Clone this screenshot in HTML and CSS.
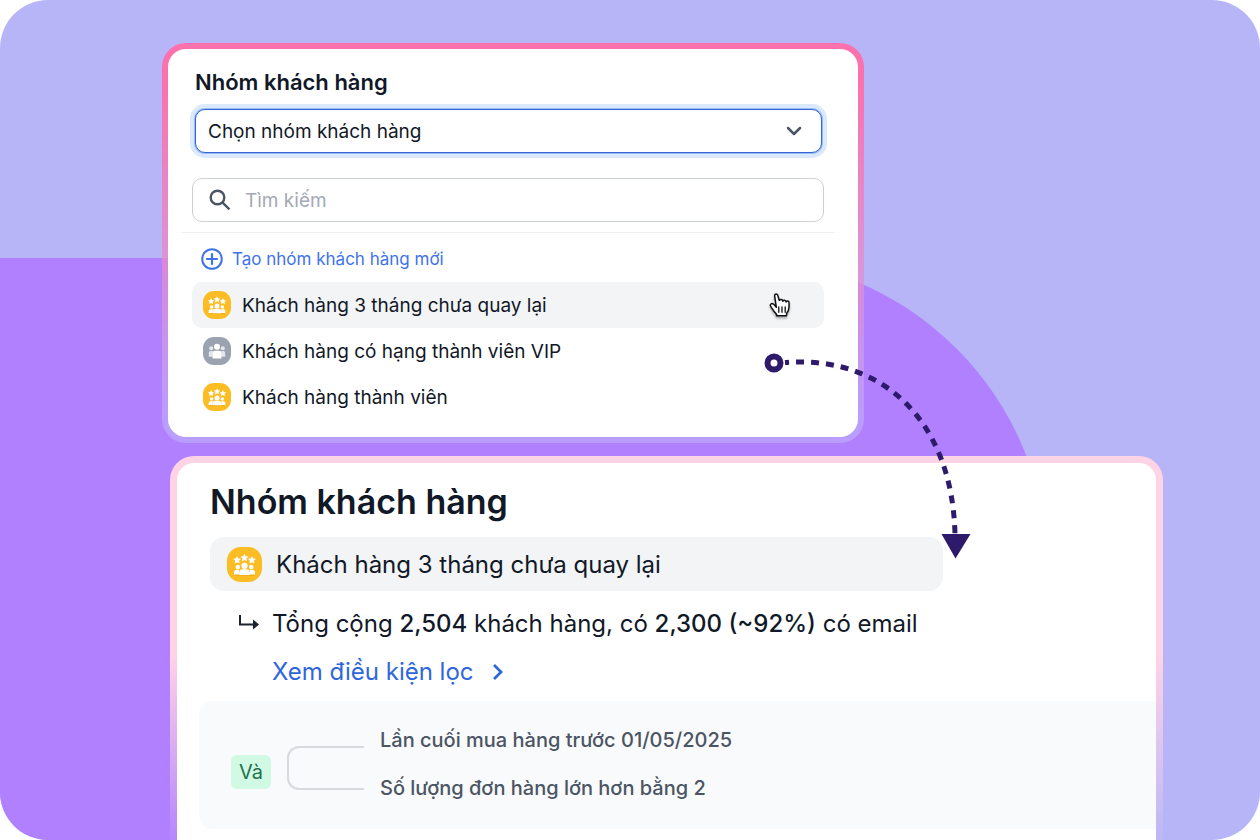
FILE: index.html
```html
<!DOCTYPE html>
<html lang="vi">
<head>
<meta charset="utf-8">
<meta name="viewport" content="width=device-width, initial-scale=1">
<title>Nhóm khách hàng</title>
<link rel="stylesheet" href="styles.css">
</head>
<body>
<svg class="sprite" aria-hidden="true">
  <defs>
    <path id="star" d="M0-3.100 1-1.100 3.200-.8 1.600.8 2 3 0 1.900-2 3-1.600.8-3.200-.8-1-1.100Z"/>
    <symbol id="icon-vip" viewBox="0 0 28 28">
      <rect width="28" height="28" rx="11" fill="#fbbd23"/>
      <path d="M6 23v-2c0-1.800 1.200-2.800 3-2.800h10c1.800 0 3 1 3 2.800v2Z" fill="#c98a00" opacity=".3"/>
      <g fill="#fff">
        <use href="#star" x="14" y="8.400"/>
        <use href="#star" x="8.100" y="10.200"/>
        <use href="#star" x="19.900" y="10.200"/>
        <circle cx="8.600" cy="16" r="1.800"/>
        <circle cx="19.400" cy="16" r="1.800"/>
        <path d="M5.600 21.900v-1.700c0-1.300.9-2 2.200-2h2v3.700ZM22.400 21.900v-1.700c0-1.300-.9-2-2.200-2h-2v3.700Z"/>
        <circle cx="14" cy="15" r="2.500"/>
        <path d="M9.800 22.300v-2.100c0-1.600 1-2.400 2.700-2.400h3c1.700 0 2.700.8 2.700 2.400v2.100Z"/>
      </g>
    </symbol>
    <symbol id="icon-people" viewBox="0 0 28 28">
      <rect width="28" height="28" rx="11" fill="#9ba3b1"/>
      <g fill="#e3e6eb">
        <circle cx="8.200" cy="11.200" r="2"/>
        <circle cx="19.800" cy="11.200" r="2"/>
        <path d="M5.800 19.800v-3.800c0-1.300.8-2 2-2h2v5.800ZM22.200 19.800v-3.800c0-1.300-.8-2-2-2h-2v5.800Z"/>
      </g>
      <circle cx="14" cy="9.800" r="3" fill="#fff"/>
      <path d="M9.600 21.600v-5.400c0-1.700 1-2.500 2.600-2.500h3.600c1.600 0 2.600.8 2.600 2.500v5.400Z" fill="#fff"/>
    </symbol>
  </defs>
</svg>

<main class="stage">
  <div class="blob"></div>

  <section class="frame frame-picker">
    <div class="picker">
      <label class="picker-title" for="group">Nhóm khách hàng</label>
      <div class="select-wrap">
        <select class="select" id="group">
          <option>Chọn nhóm khách hàng</option>
        </select>
        <svg class="select-arrow" viewBox="0 0 16 10" aria-hidden="true"><path d="M2 2l6 6 6-6" fill="none" stroke="#4b5563" stroke-width="2.500" stroke-linecap="round" stroke-linejoin="round"/></svg>
      </div>

      <div class="menu">
        <label class="search">
          <svg class="search-icon" viewBox="0 0 22 22" aria-hidden="true"><g fill="none" stroke="#4b5563" stroke-width="2.400"><circle cx="8.500" cy="8.500" r="6.800"/><path d="M13.400 13.400l7 7"/></g></svg>
          <input class="search-input" type="text" placeholder="Tìm kiếm" aria-label="Tìm kiếm">
        </label>
        <hr class="rule">
        <button class="create" type="button">
          <svg class="create-icon" viewBox="0 0 22 22" aria-hidden="true"><g fill="none" stroke="#3f73ec" stroke-width="2"><circle cx="11" cy="11" r="9.800"/><path d="M11 6v10M6 11h10" stroke-width="2.200" stroke-linecap="round"/></g></svg>
          Tạo nhóm khách hàng mới
        </button>
        <button class="option option-active" type="button">
          <svg class="badge"><use href="#icon-vip"/></svg>
          <span class="option-text">Khách hàng 3 tháng chưa quay lại</span>
          <svg class="hand" viewBox="0 0 22 26" aria-hidden="true"><path d="M7.300 15.200 5.200 12.800C4.300 11.700 2.900 11.200 2 12c-.9.700-.7 1.800 0 2.900l2.900 4.300 2.600 3.100v1.500h9.900l.2-2.200c1.900-2.200 2.300-4 2.400-6.300l.1-4.400c0-2.100-2.500-2.600-3-.8 0-2-2.900-2.700-3.300-.8-.1-2-2.700-2.400-3.500-.8L8.900 3.700C8.400 1.100 5.200 1.700 5.700 4.400Z" fill="#fff" stroke="#111" stroke-width="1.500" stroke-linejoin="round"/><path d="M9.800 15v5.300M13 15v5.300M16.200 15v5.300" fill="none" stroke="#111" stroke-width="1.300" stroke-linecap="round"/></svg>
        </button>
        <button class="option" type="button">
          <svg class="badge"><use href="#icon-people"/></svg>
          <span class="option-text">Khách hàng có hạng thành viên VIP</span>
        </button>
        <button class="option" type="button">
          <svg class="badge"><use href="#icon-vip"/></svg>
          <span class="option-text">Khách hàng thành viên</span>
        </button>
      </div>
    </div>
  </section>

  <section class="frame frame-result">
    <div class="result">
      <h2 class="result-title">Nhóm khách hàng</h2>
      <div class="chosen">
        <svg class="badge badge-large"><use href="#icon-vip"/></svg>
        <span>Khách hàng 3 tháng chưa quay lại</span>
      </div>
      <div class="summary">
        <svg class="turn" viewBox="0 0 20 18" aria-hidden="true"><path d="M1 0v9.500h14" fill="none" stroke="#1b2333" stroke-width="2"/><path d="M14 4.500l6 5-6 5Z" fill="#1b2333"/></svg>
        <p class="summary-text">Tổng cộng <strong>2,504</strong> khách hàng, có <strong>2,300 (~92%)</strong> có email</p>
      </div>
      <a class="filter-link" href="#conditions">Xem điều kiện lọc
        <svg class="filter-arrow" viewBox="0 0 12 18" aria-hidden="true"><path d="M2 2l7 7-7 7" fill="none" stroke="#2f66dd" stroke-width="2.800"/></svg>
      </a>
      <div class="conditions" id="conditions">
        <span class="and">Và</span>
        <span class="bracket"></span>
        <ul class="condition-list">
          <li>Lần cuối mua hàng trước 01/05/2025</li>
          <li>Số lượng đơn hàng lớn hơn bằng 2</li>
        </ul>
      </div>
    </div>
  </section>

  <svg class="connector" viewBox="0 0 210 210" aria-hidden="true">
    <circle cx="14" cy="13" r="6.500" fill="#fff" stroke="#2e1a6b" stroke-width="6"/>
    <path d="M25 12.500C120 5 192 68 195 184" fill="none" stroke="#2e1a6b" stroke-width="5" stroke-dasharray="8 7" stroke-dashoffset="4"/>
    <path d="M181.500 184h29L195.500 208.500Z" fill="#2e1a6b"/>
  </svg>
</main>
</body>
</html>
```
FILE: styles.css
```css
* {
  box-sizing: border-box;
}

body {
  margin: 0;
  background: #fff;
  color: #111827;
  font-family: Inter, "Noto Sans", sans-serif;
}

button,
input,
select {
  font: inherit;
  color: inherit;
}

.sprite {
  position: absolute;
  width: 0;
  height: 0;
}

.stage {
  position: relative;
  display: flex;
  flex-direction: column;
  gap: 13px;
  height: 100vh;
  padding: 43px 97px 0 162px;
  overflow: hidden;
  border-radius: 48px;
  background: #b7b5f7;
}

.blob {
  position: absolute;
  top: 258px;
  left: 0;
  width: 1047px;
  height: 618px;
  border-radius: 0 309px 309px 0;
  background: #b080ff;
}

.frame {
  position: relative;
  flex: none;
}

.frame-picker {
  max-width: 702px;
  padding: 6px;
  border-radius: 24px;
  background: linear-gradient(#fb71ae 10%, rgba(193, 181, 255, 0.55) 95%);
}

.picker {
  padding: 18px 22px 17px 24px;
  border-radius: 18px;
  background: #fff;
}

.picker-title {
  display: block;
  padding-left: 3px;
  font-size: 22px;
  font-weight: 600;
  line-height: 30px;
}

.select-wrap {
  position: relative;
  margin: 12px 14px 0 3px;
}

.select {
  display: block;
  width: 100%;
  height: 44px;
  padding: 0 12px;
  appearance: none;
  border: 1px solid #3366d0;
  border-radius: 10px;
  outline: 0;
  background: #fff;
  box-shadow: 0 0 0 1px #9cbcf5, 0 0 0 5px #dbe9fe;
  font-size: 19px;
}

.select-arrow {
  position: absolute;
  top: 17px;
  right: 20px;
  width: 16px;
  height: 10px;
  pointer-events: none;
}

.menu {
  display: flex;
  flex-direction: column;
  margin: 25px 12px 0 0;
}

.search {
  display: flex;
  align-items: center;
  gap: 14px;
  height: 44px;
  padding: 0 16px;
  border: 1px solid #cbcfd7;
  border-radius: 10px;
}

.search-icon {
  width: 22px;
  height: 22px;
}

.search-input {
  flex: 1;
  min-width: 0;
  padding: 0;
  border: 0;
  outline: 0;
  background: none;
  font-size: 19px;
}

.search-input::placeholder {
  color: #a3a9b6;
  opacity: 1;
}

.rule {
  width: calc(100% + 22px);
  height: 1px;
  margin: 10px -11px 8px;
  border: 0;
  background: #eceef1;
}

.create {
  display: flex;
  align-items: center;
  gap: 9px;
  height: 36px;
  margin-bottom: 5px;
  padding: 0 9px;
  border: 0;
  background: none;
  color: #3f73ec;
  font-size: 17px;
}

.create-icon {
  width: 22px;
  height: 22px;
}

.option {
  display: flex;
  align-items: center;
  gap: 11px;
  height: 46px;
  padding: 0 33px 0 11px;
  border: 0;
  border-radius: 10px;
  background: none;
  font-size: 19px;
  text-align: left;
}

.option-active {
  background: #f2f4f5;
}

.option-text {
  flex: 1;
}

.badge {
  flex: none;
  width: 28px;
  height: 28px;
}

.badge-large {
  width: 35px;
  height: 35px;
}

.hand {
  width: 22px;
  height: 26px;
  filter: drop-shadow(0 2px 1px rgba(0, 0, 0, 0.3));
}

.frame-result {
  margin-left: 8px;
  padding: 7px 7px 0;
  border-radius: 24px 24px 0 0;
  background: linear-gradient(#ffd3e6 50%, rgba(255, 211, 230, 0) 100%);
}

.result {
  padding: 16px 0 24px 22px;
  border-radius: 17px 17px 0 0;
  background: #fff;
}

.result-title {
  margin: 0 0 12px 11px;
  font-size: 34px;
  font-weight: 600;
  line-height: 46px;
}

.chosen {
  display: flex;
  align-items: center;
  gap: 14px;
  max-width: 733px;
  height: 54px;
  margin-left: 11px;
  padding: 0 17px;
  border-radius: 14px;
  background: #f2f4f5;
  font-size: 24px;
}

.summary {
  display: flex;
  align-items: center;
  gap: 13px;
  margin: 17px 0 15px 40px;
}

.turn {
  width: 20px;
  height: 18px;
}

.summary-text {
  margin: 0;
  font-size: 24px;
  line-height: 32px;
}

.summary-text strong {
  font-weight: 500;
}

.filter-link {
  display: flex;
  align-items: center;
  gap: 18px;
  width: max-content;
  margin-left: 73px;
  color: #2f66dd;
  font-size: 24px;
  line-height: 34px;
  text-decoration: none;
}

.filter-arrow {
  width: 12px;
  height: 18px;
}

.conditions {
  display: flex;
  align-items: center;
  height: 128px;
  margin-top: 12px;
  padding-left: 32px;
  border-radius: 14px 0 0 14px;
  background: #f9fafb;
}

.and {
  width: 40px;
  margin: 14px 16px 0 0;
  border-radius: 6px;
  background: #d0fae3;
  color: #24704f;
  font-size: 20px;
  line-height: 34px;
  text-align: center;
}

.bracket {
  width: 77px;
  height: 44px;
  margin: 6px 16px 0 0;
  border: 2px solid #d7dade;
  border-right: 0;
  border-radius: 12px 0 0 12px;
}

.condition-list {
  display: grid;
  gap: 20px;
  margin: 0;
  padding: 0 0 2px;
  color: #4b5563;
  font-size: 20px;
  font-weight: 500;
  line-height: 28px;
  list-style: none;
}

.connector {
  position: absolute;
  top: 350px;
  left: 760px;
  width: 210px;
  height: 210px;
  overflow: visible;
  pointer-events: none;
}
```
